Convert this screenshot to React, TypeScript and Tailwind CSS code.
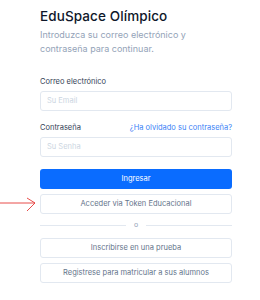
import React from "react";

export default function App() {
  return (
    <div className="relative w-[260px] h-[300px] bg-white overflow-hidden" style={{ fontFamily: "Inter, 'Noto Sans', sans-serif" }}>
      <svg className="absolute left-0 top-[196px]" width="40" height="18" viewBox="0 0 40 18">
        <path d="M0 7 H35 M27 2 L35 7 L27 15" fill="none" stroke="#e53935" strokeWidth="0.9" />
      </svg>
      <div className="ml-[40px] w-[192px] pt-[8px] flex flex-col">
        <h1 className="text-[13.5px] leading-[16px] font-medium text-[#0f172a] tracking-[0.1px]">EduSpace Olímpico</h1>
        <p className="mt-[4px] text-[9px] leading-[14px] text-[#94a3b8]">
          Introduzca su correo electrónico y
          <br />
          contraseña para continuar.
        </p>
        <label className="mt-[21px] text-[7.5px] leading-[10px] text-[#334155]">Correo electrónico</label>
        <div className="mt-[4px] h-[20px] rounded-[3px] border border-[#e2e8f0] flex items-center px-[6px] text-[7.5px] text-[#cbd5e1]">
          Su Email
        </div>
        <div className="mt-[12px] flex justify-between items-center text-[7.5px] leading-[10px]">
          <span className="text-[#334155]">Contraseña</span>
          <span className="text-[#3b82f6]">¿Ha olvidado su contraseña?</span>
        </div>
        <div className="mt-[4px] h-[20px] rounded-[3px] border border-[#e2e8f0] flex items-center px-[6px] text-[7.5px] text-[#cbd5e1]">
          Su Senha
        </div>
        <button className="mt-[12px] h-[20px] rounded-[3px] bg-[#0a6cff] text-white text-[7.5px] flex items-center justify-center">
          Ingresar
        </button>
        <button className="mt-[5px] h-[20px] rounded-[3px] border border-[#e2e8f0] bg-white text-[#64748b] text-[7.5px] flex items-center justify-center">
          Acceder via Token Educacional
        </button>
        <div className="mt-[6px] flex items-center gap-[8px] h-[10px]">
          <div className="flex-1 h-px bg-[#e2e8f0]" />
          <span className="text-[7px] leading-[10px] text-[#94a3b8]">o</span>
          <div className="flex-1 h-px bg-[#e2e8f0]" />
        </div>
        <button className="mt-[8px] h-[20px] rounded-[3px] border border-[#e2e8f0] bg-white text-[#64748b] text-[7.5px] flex items-center justify-center">
          Inscribirse en una prueba
        </button>
        <button className="mt-[5px] h-[20px] rounded-[3px] border border-[#e2e8f0] bg-white text-[#64748b] text-[7.5px] flex items-center justify-center">
          Registrese para matricular a sus alumnos
        </button>
      </div>
    </div>
  );
}
